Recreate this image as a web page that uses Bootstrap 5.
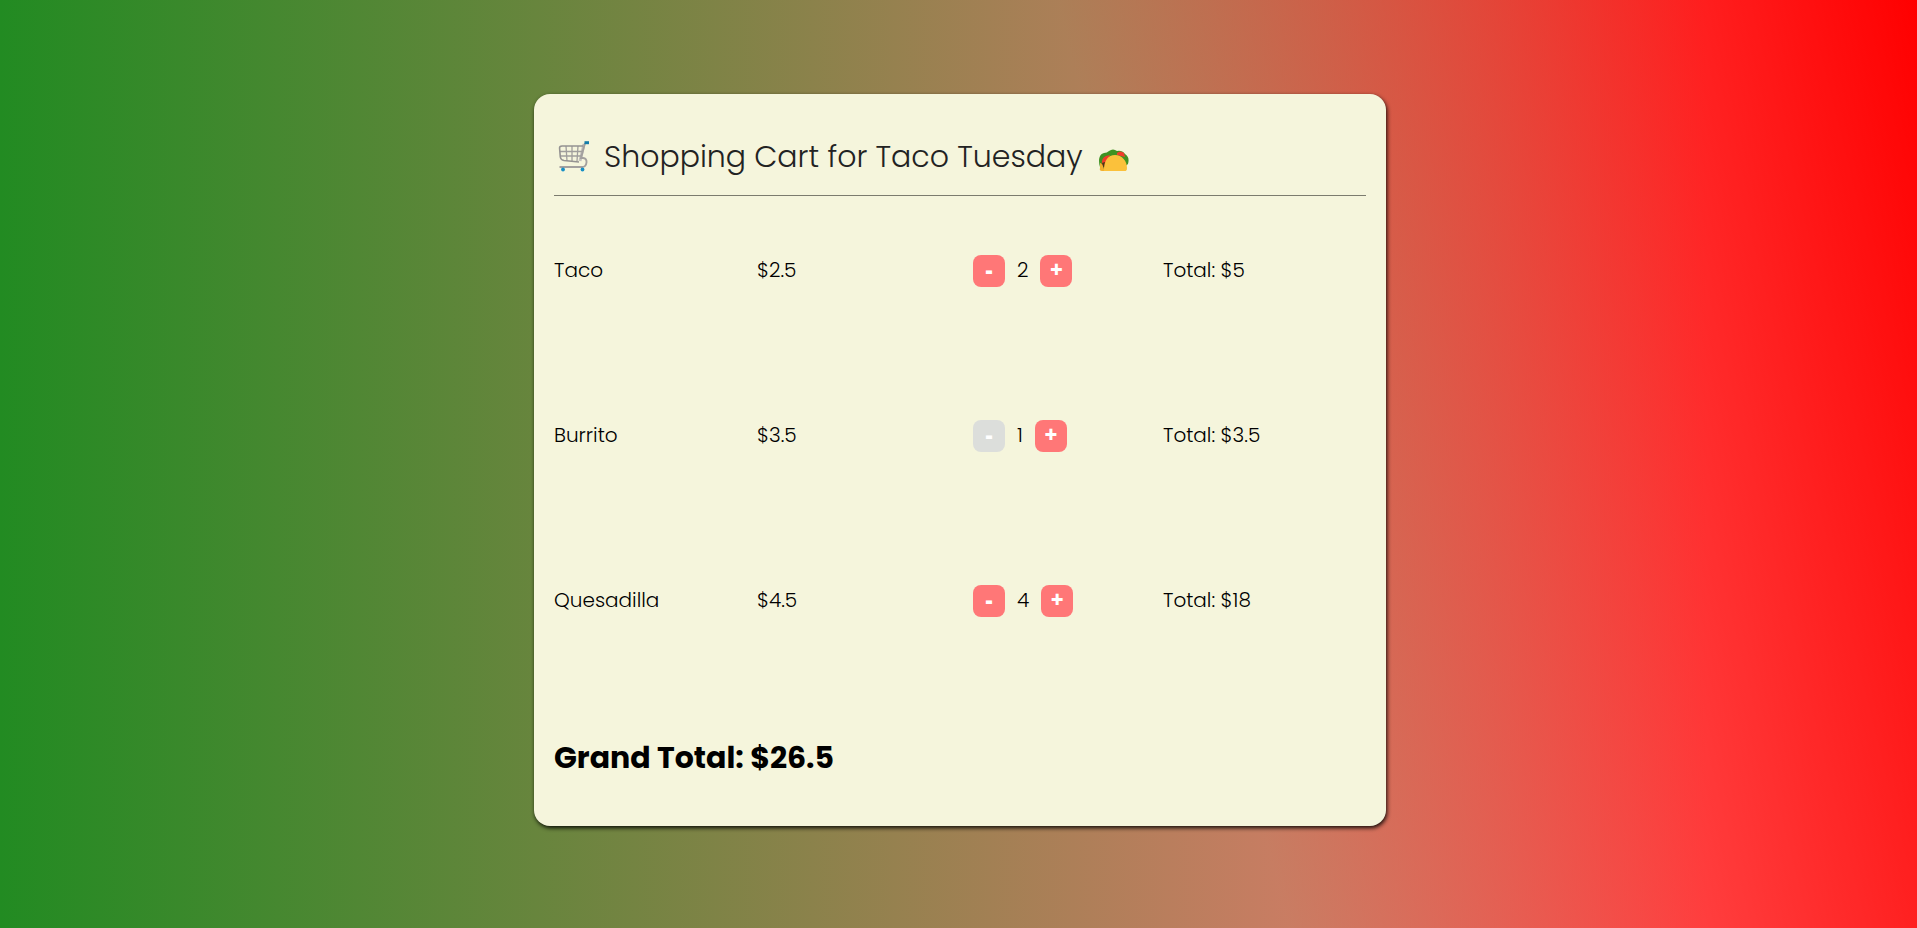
<!DOCTYPE html>
<html lang="en">
<head>
<meta charset="utf-8">
<meta name="viewport" content="width=device-width, initial-scale=1">
<title>Shopping Cart for Taco Tuesday</title>
<link href="https://cdn.jsdelivr.net/npm/bootstrap@5.3.0/dist/css/bootstrap.min.css" rel="stylesheet">
<style>
  body {
    font-family: Poppins, Inter, "Open Sans", sans-serif;
    font-weight: 300;
    font-size: 20px;
    line-height: 30px;
    color: #000;
    background:
      linear-gradient(90deg, forestgreen, rgba(255, 0, 0, .53) 89%),
      linear-gradient(256deg, red, white 40%);
  }
  .page { padding: 94px 0 80px 3px; }
  .cart {
    max-width: 852px;
    padding: 44px 20px 49px;
    background: beige;
    border-radius: 16px;
    box-shadow: 1px 2px 4px rgba(0, 0, 0, .9);
  }
  .cart-title {
    font-size: 30px;
    line-height: 38px;
    font-weight: 300;
    color: #222;
    gap: 12px;
    padding: 0 4px 19px;
    border-bottom: 1px solid #7b7b6e;
  }
  .cart-items { table-layout: fixed; }
  .cart-items tr { height: 165px; }
  .cart-items td { padding: 59px 0 0; vertical-align: top; }
  .stepper { padding-left: 13px; gap: 12px; }
  .step {
    width: 32px;
    height: 32px;
    border: 0;
    border-radius: 8px;
    background: #ff7777;
    color: #fff;
    font-family: "Open Sans", sans-serif;
    font-size: 22px;
    font-weight: 800;
    line-height: 28px;
    padding: 0 0 4px;
  }
  .step:disabled { background: #dcdedb; }
  .grand { font-size: 30px; line-height: 38px; font-weight: 700; margin-top: 48px; }
</style>
</head>
<body class="min-vh-100">
<div class="page">
  <main class="cart mx-auto">
    <h1 class="cart-title d-flex align-items-center mb-0">
      <svg class="flex-shrink-0" width="34" height="34" viewBox="0 0 34 34" fill="none" aria-hidden="true">
        <path d="M26 4 22 21" stroke="#c3c0bd" stroke-width="3"/>
        <path d="M2 11.500H24M2.500 16H23M8 6l1 15M14 6v15M20 6l-1 15" stroke="#a09e9c" stroke-width="1.300"/>
        <path d="M25 6H4Q1.300 6 1.600 8.500L2.300 17Q2.700 20 6 20.500L21 22" stroke="#949291" stroke-width="1.600"/>
        <path d="M27 3 23 18 25 18Q29 18.500 28.500 22.500 28 27 24 27H1.500" stroke="#a3a09e" stroke-width="1.900"/>
        <path d="M26.500 2.700H31" stroke="#147da9" stroke-width="3"/>
        <circle cx="5" cy="29.500" r="1.900" fill="#168fc5"/><circle cx="24.500" cy="29.500" r="1.900" fill="#168fc5"/>
      </svg>
      <span>Shopping Cart for Taco Tuesday</span>
      <svg class="ms-1 flex-shrink-0" width="30" height="30" viewBox="0 -1 30 30" aria-hidden="true">
        <path d="M1 24C-1 18 0 11 5 10Q8 10 10 8 14 5 18 8 23 7 26 11 31 14 29 21L24 25Z" fill="#3f9222"/>
        <path d="M3 22Q2 15 7 13L11 12 6 24ZM18 10Q21 7 25 10L26 14 18 12Z" fill="#f03c2b"/>
        <path d="M1 20Q3 20 5 25L8 19 27 25Q28 28 25 28H3Q0 28 1 25Z" fill="#f2b02e"/>
        <path d="M3 20 6 19 5 26Z" fill="#4b3a16"/>
        <path d="M5 28C5 17 9 12 16 12S28 18 28 25Q28 28 26 28Z" fill="#fbc13b"/>
      </svg>
    </h1>
    <table class="cart-items w-100">
      <tbody>
        <tr>
          <td>Taco</td><td>$2.5</td>
          <td><div class="stepper d-flex align-items-start"><button class="step" type="button" aria-label="Remove one taco">-</button><span>2</span><button class="step" type="button" aria-label="Add one taco">+</button></div></td>
          <td>Total: $5</td>
        </tr>
        <tr>
          <td>Burrito</td><td>$3.5</td>
          <td><div class="stepper d-flex align-items-start"><button class="step" type="button" aria-label="Remove one burrito" disabled>-</button><span>1</span><button class="step" type="button" aria-label="Add one burrito">+</button></div></td>
          <td>Total: $3.5</td>
        </tr>
        <tr>
          <td>Quesadilla</td><td>$4.5</td>
          <td><div class="stepper d-flex align-items-start"><button class="step" type="button" aria-label="Remove one quesadilla">-</button><span>4</span><button class="step" type="button" aria-label="Add one quesadilla">+</button></div></td>
          <td>Total: $18</td>
        </tr>
      </tbody>
    </table>
    <h2 class="grand mb-0">Grand Total: $26.5</h2>
  </main>
</div>
<script src="https://cdn.jsdelivr.net/npm/bootstrap@5.3.0/dist/js/bootstrap.bundle.min.js"></script>
</body>
</html>
